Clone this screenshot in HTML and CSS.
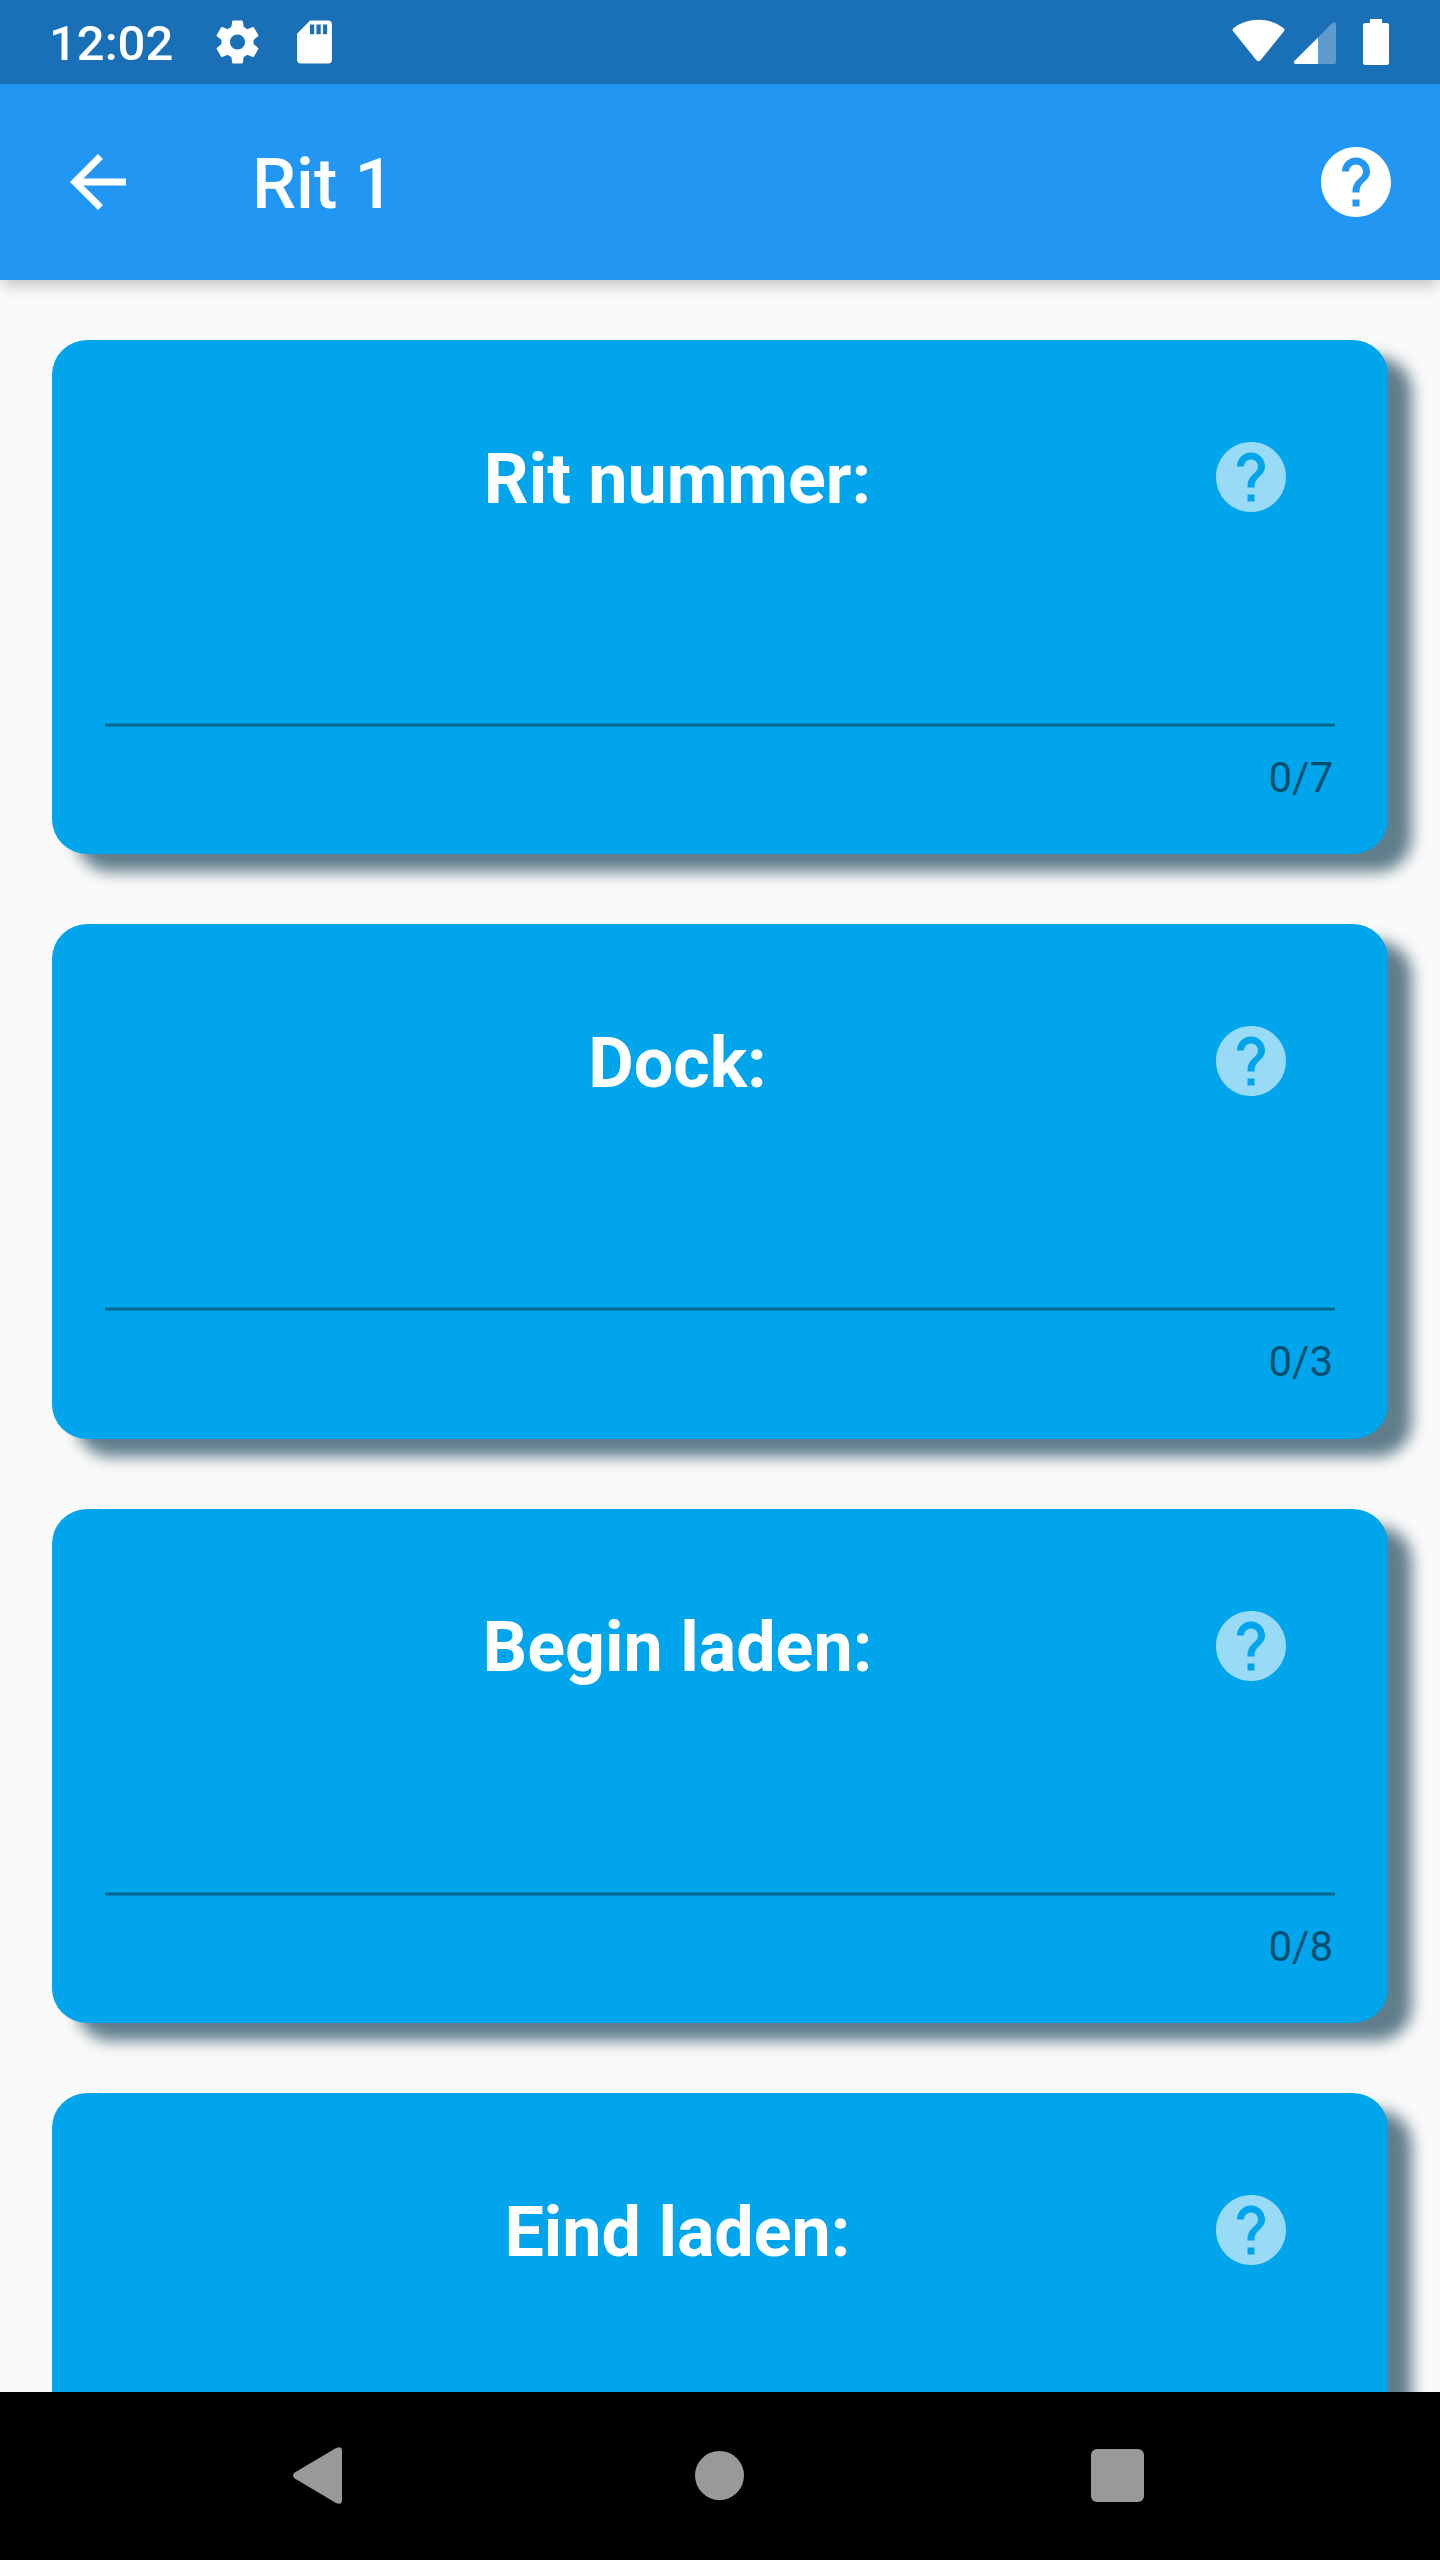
FILE: index.html
```html
<!DOCTYPE html>
<html lang="nl">
<head>
<meta charset="utf-8">
<title>Rit 1</title>
<link rel="stylesheet" href="styles.css">
</head>
<body>
<svg class="defs" aria-hidden="true">
  <symbol id="help" viewBox="0 0 24 24"><path d="M12 2C6.48 2 2 6.48 2 12s4.48 10 10 10 10-4.48 10-10S17.520 2 12 2zm1 17h-2v-2h2v2zm2.070-7.750l-.9.920C13.450 12.900 13 13.500 13 15h-2v-.5c0-1.100.45-2.100 1.170-2.830l1.240-1.260c.37-.36.59-.86.59-1.410 0-1.100-.9-2-2-2s-2 .9-2 2H8c0-2.210 1.790-4 4-4s4 1.790 4 4c0 .88-.36 1.680-.93 2.250z"/></symbol>
</svg>
<div class="screen">
  <div class="status">
    <span class="clock">12:02</span>
    <svg class="gear" viewBox="2 2 20 20"><path d="M19.430 12.980c.04-.32.07-.64.07-.98s-.03-.66-.07-.98l2.110-1.650c.19-.15.24-.42.12-.64l-2-3.460c-.12-.22-.39-.3-.61-.22l-2.490 1c-.52-.4-1.080-.73-1.690-.98l-.38-2.650C14.460 2.180 14.250 2 14 2h-4c-.25 0-.46.18-.49.42l-.38 2.650c-.61.25-1.170.59-1.690.98l-2.490-1c-.23-.09-.49 0-.61.22l-2 3.460c-.13.22-.07.49.12.64l2.110 1.650c-.04.32-.07.65-.07.98s.03.66.07.98l-2.110 1.650c-.19.15-.24.42-.12.64l2 3.460c.12.22.39.3.61.22l2.490-1c.52.4 1.080.73 1.690.98l.38 2.650c.03.24.24.42.49.42h4c.25 0 .46-.18.49-.42l.38-2.650c.61-.25 1.170-.59 1.690-.98l2.490 1c.23.09.49 0 .61-.22l2-3.460c.12-.22.07-.49-.12-.64l-2.110-1.650zM12 15.500c-1.930 0-3.500-1.570-3.500-3.500s1.570-3.500 3.500-3.500 3.500 1.570 3.500 3.500-1.570 3.500-3.500 3.500z"/></svg>
    <svg class="sd" viewBox="0 0 36 44"><path fill-rule="evenodd" d="M13.500 0H32q4 0 4 4v36q0 4-4 4H4q-4 0-4-4V13.500zM13.300 4v10h4.400V4zM20 4v10h4.400V4zM26.700 4v10h4.300V4z"/></svg>
    <svg class="wifi" viewBox="0 0 54 44"><path d="M1.200 9.500Q12 .7 27 .7T52.800 9.500Q54.200 11 53 12.500L29.300 42Q27 44.500 24.700 42L1 12.500Q-.2 11 1.200 9.500z"/></svg>
    <svg class="signal" viewBox="0 0 42 42"><path opacity=".3" d="M24 15.500L38 1.200Q42-1.500 42 3v37q0 2-2 2H24z"/><path d="M24 15.500V42H2Q-1 42 .3 39z"/></svg>
    <svg class="battery" viewBox="0 0 26 46"><path d="M7 0h12v4h5q2 0 2 2v38q0 2-2 2H2q-2 0-2-2V6q0-2 2-2h5z"/></svg>
  </div>
  <header class="appbar">
    <svg class="back" viewBox="4 4 16 16"><path d="M20 11H7.830l5.590-5.590L12 4l-8 8 8 8 1.410-1.410L7.830 13H20v-2z"/></svg>
    <h1>Rit 1</h1>
    <svg class="help"><use href="#help"/></svg>
  </header>
  <main>
    <section class="card">
      <div class="head"><h2>Rit nummer:</h2><svg class="help"><use href="#help"/></svg></div>
      <div class="field"></div>
      <div class="count">0/7</div>
    </section>
    <section class="card">
      <div class="head"><h2>Dock:</h2><svg class="help"><use href="#help"/></svg></div>
      <div class="field"></div>
      <div class="count">0/3</div>
    </section>
    <section class="card">
      <div class="head"><h2>Begin laden:</h2><svg class="help"><use href="#help"/></svg></div>
      <div class="field"></div>
      <div class="count">0/8</div>
    </section>
    <section class="card">
      <div class="head"><h2>Eind laden:</h2><svg class="help"><use href="#help"/></svg></div>
      <div class="field"></div>
    </section>
  </main>
  <nav class="navbar">
    <svg class="nav-back" viewBox="0 0 49 57"><path d="M1.800 25.500L43 1Q49-1.500 49 4v49q0 5.500-6 3L1.800 31.500Q-1.800 28.500 1.800 25.500z"/></svg>
    <span class="nav-home"></span>
    <span class="nav-recent"></span>
  </nav>
</div>
</body>
</html>
```
FILE: styles.css
```css
* { box-sizing: border-box; }
body { margin: 0; font-family: Roboto, sans-serif; }
.defs { display: none; }
svg { display: block; flex: none; fill: #fff; }
h1, h2 { margin: 0; color: #fff; }

.screen {
  width: 1440px;
  height: 2560px;
  display: flex;
  flex-direction: column;
  overflow: hidden;
  background: #fafafa;
}

.status {
  flex: none;
  position: relative;
  z-index: 2;
  height: 84px;
  display: flex;
  align-items: flex-start;
  padding: 0 51px 0 49px;
  background: #1a70b7;
}
.clock {
  width: 167px;
  font-size: 49px;
  font-weight: 500;
  line-height: 58px;
  padding-top: 15px;
  color: #fff;
}
.gear { width: 43px; height: 44px; margin-top: 20px; }
.sd { width: 35px; height: 44px; margin: 20px auto 0 38px; }
.wifi { width: 53px; height: 43px; margin-top: 19px; }
.signal { width: 42px; height: 42px; margin: 22px 27px 0 9px; }
.battery { width: 26px; height: 46px; margin-top: 19px; }

.appbar {
  flex: none;
  position: relative;
  z-index: 1;
  height: 196px;
  display: flex;
  align-items: center;
  padding: 0 42px 0 70px;
  background: #2196f3;
  box-shadow: 0 8px 14px -4px rgba(0, 0, 0, .17), 0 4px 18px rgba(0, 0, 0, .1);
}
.back { width: 56px; height: 56px; }
.appbar h1 {
  flex: 1;
  padding-left: 126px;
  font-size: 70px;
  font-weight: 500;
  line-height: 82px;
  padding-top: 3px;
}
.help { width: 84px; height: 84px; }

main {
  flex: 1;
  min-height: 0;
  overflow: hidden;
  display: flex;
  flex-direction: column;
  gap: 70px;
  padding: 60px 52px 0;
}
.card {
  flex: none;
  height: 514.400px;
  padding: 73px 53px 0;
  border-radius: 35px;
  background: #00a5eb;
  box-shadow: 24px 17.500px 15px #607d8b;
}
.head { display: flex; align-items: center; height: 128px; padding: 0 42px 0 41px; }
.head h2 {
  flex: 1;
  text-align: center;
  font-size: 70px;
  font-weight: 700;
  line-height: 82px;
  padding-top: 3px;
}
.head .help { opacity: .6; }
.field {
  height: 186px;
  background: linear-gradient(#0182b8 1px, #016792 1px, #016792 3px, #0182b8 3px) bottom / 100% 4px no-repeat;
}
.count {
  padding: 26px 2px 0 0;
  text-align: right;
  font-size: 42px;
  line-height: 50px;
  color: rgba(0, 0, 0, .54);
}

.navbar {
  flex: none;
  height: 168px;
  display: flex;
  align-items: center;
  padding: 0 296px 2px 293px;
  background: #000;
}
.nav-back { width: 49px; height: 57px; fill: #999; }
.nav-home { width: 49px; height: 49px; margin: 0 auto 0 353px; border-radius: 50%; background: #999; }
.nav-recent { width: 53px; height: 53px; border-radius: 6px; background: #999; }
```
